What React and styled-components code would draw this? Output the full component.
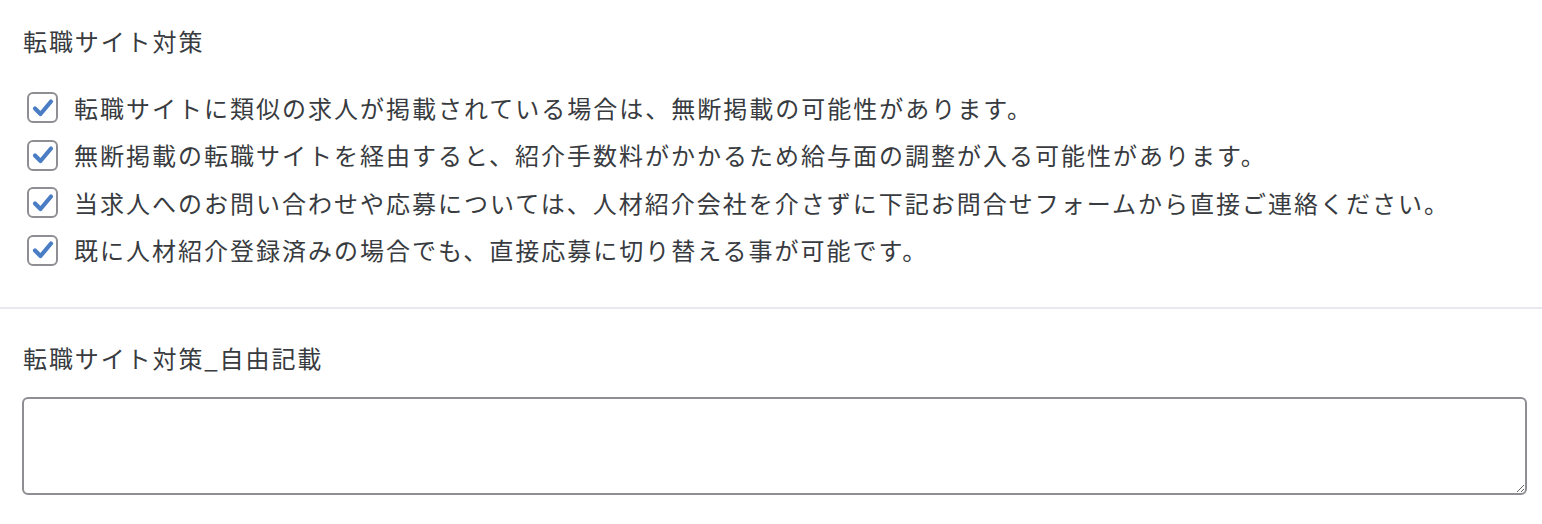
import styled, { createGlobalStyle } from 'styled-components';

const GlobalStyle = createGlobalStyle`
  html, body {
    margin: 0;
    padding: 0;
    background: #fff;
  }
  body {
    font-family: "Noto Sans CJK JP", "Noto Sans", sans-serif;
    color: #383b40;
  }
`;

const Section = styled.section`
  padding: ${(p) => p.$top}px 14px ${(p) => p.$bottom}px 23px;
  border-top: ${(p) => (p.$divided ? '2px solid #e8e8ee' : 'none')};
`;

const Label = styled.div`
  font-size: 24px;
  line-height: 36px;
  letter-spacing: 1.9px;
  margin-bottom: ${(p) => p.$gap}px;
`;

const List = styled.ul`
  list-style: none;
  margin: 0;
  padding: 0;
`;

const Row = styled.li`
  display: flex;
  align-items: center;
  height: 47.5px;
  gap: 16px;
  padding-left: 4px;
`;

const Box = styled.span`
  flex: none;
  width: 27px;
  height: 27px;
  border: 2px solid #8e8e93;
  border-radius: 6px;
  background: #fff;
  display: flex;
  align-items: center;
  justify-content: center;
`;

const RowText = styled.span`
  font-size: 24px;
  letter-spacing: 2px;
  line-height: 36px;
`;

const TextArea = styled.textarea`
  display: block;
  box-sizing: border-box;
  width: 100%;
  height: 98px;
  margin-left: -1px;
  border: 2px solid #8e8e93;
  border-radius: 6px;
  font-family: inherit;
  font-size: 20px;
  padding: 8px 12px;
  outline: none;
`;

const Check = () => (
  <svg width="22" height="20" viewBox="0 0 22 20">
    <path
      d="M3 10.5 L8.5 16 L19 3.5"
      fill="none"
      stroke="#4a7dc4"
      strokeWidth="4.2"
      strokeLinecap="round"
      strokeLinejoin="round"
    />
  </svg>
);

const items = [
  '転職サイトに類似の求人が掲載されている場合は、無断掲載の可能性があります。',
  '無断掲載の転職サイトを経由すると、紹介手数料がかかるため給与面の調整が入る可能性があります。',
  '当求人へのお問い合わせや応募については、人材紹介会社を介さずに下記お問合せフォームから直接ご連絡ください。',
  '既に人材紹介登録済みの場合でも、直接応募に切り替える事が可能です。',
];

export default function App() {
  return (
    <>
      <GlobalStyle />
      <Section $top={23} $bottom={33}>
        <Label $gap={25}>転職サイト対策</Label>
        <List>
          {items.map((t) => (
            <Row key={t}>
              <Box>
                <Check />
              </Box>
              <RowText>{t}</RowText>
            </Row>
          ))}
        </List>
      </Section>
      <Section $divided $top={31} $bottom={29}>
        <Label $gap={21}>転職サイト対策_自由記載</Label>
        <TextArea />
      </Section>
    </>
  );
}
